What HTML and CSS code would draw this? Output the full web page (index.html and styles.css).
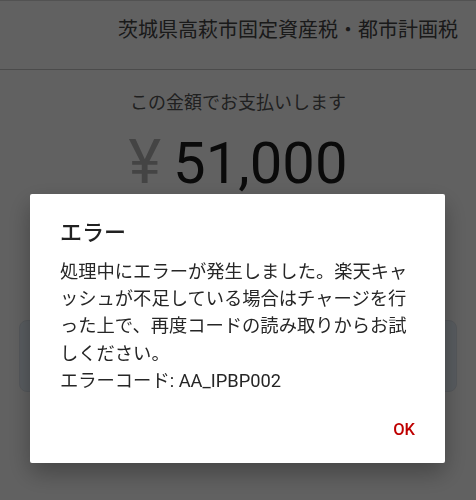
FILE: index.html
```html
<!DOCTYPE html>
<html lang="ja">
<head>
  <meta charset="UTF-8" />
  <meta name="viewport" content="width=device-width, initial-scale=1.0"/>
  <title>お支払い</title>
  <link rel="stylesheet" href="styles.css">
</head>
<body>

  <header class="payee">
    <h1>茨城県高萩市固定資産税・都市計画税</h1>
  </header>

  <section class="amount-area">
    <p class="prompt">この金額でお支払いします</p>
    <div class="amount">
      <span class="yen">¥</span>
      <span class="value">51,000</span>
    </div>
    <div class="info-card"></div>
  </section>

  <!-- Error dialog over a dimmed page -->
  <div class="scrim">
    <div class="dialog" role="alertdialog">
      <h2>エラー</h2>
      <p class="message">処理中にエラーが発生しました。楽天キャッシュが不足している場合はチャージを行った上で、再度コードの読み取りからお試しください。<br>エラーコード: AA_IPBP002</p>
      <div class="actions">
        <button type="button">OK</button>
      </div>
    </div>
  </div>

</body>
</html>
```

FILE: styles.css
```css
:root {
  --text: #3c3c3c;
  --red: #bf0000;
}
* { box-sizing: border-box; }
body {
  margin: 0;
  background: #fff;
  color: var(--text);
  font-family: Roboto, "Noto Sans CJK JP", sans-serif;
}

/* Payee header */
.payee {
  height: 70px;
  padding: 14px 18px 0;
  border-top: 1px solid #d8d8d8;
  border-bottom: 1px solid #c4c4c4;
}
.payee h1 {
  margin: 0;
  text-align: right;
  font-size: 20px;
  font-weight: 400;
  line-height: 30px;
  color: #444;
}

/* Amount */
.amount-area {
  display: flex;
  flex-direction: column;
  align-items: center;
}
.prompt {
  margin: 20px 0 0;
  font-size: 18px;
  line-height: 26px;
  color: #555;
}
.amount {
  display: flex;
  align-items: baseline;
  gap: 12px;
  margin-top: 14px;
  line-height: 64px;
}
.amount .yen {
  font-size: 62px;
  color: #b4b4b4;
}
.amount .value {
  font-size: 58px;
  color: #1c1c1c;
}
.info-card {
  align-self: stretch;
  height: 72px;
  margin: 125px 19px 0;
  background: #e9f2fb;
  border: 1px solid #dfe6ee;
  border-radius: 8px;
}

/* Dialog */
.scrim {
  position: fixed;
  inset: 0;
  background: rgba(0, 0, 0, 0.62);
  padding: 194px 31px 0 30px;
}
.dialog {
  background: #fff;
  border-radius: 2px;
  padding: 24px 30px 16px;
  height: 269px;
  box-shadow: 0 10px 24px rgba(0, 0, 0, 0.3);
}
.dialog h2 {
  margin: 0;
  font-size: 22px;
  font-weight: 500;
  line-height: 30px;
  color: #212121;
}
.message {
  margin: 10px 0 0;
  font-size: 18.3px;
  line-height: 27.2px;
  color: #262626;
  line-break: anywhere;
}
.actions {
  display: flex;
  justify-content: flex-end;
  margin-top: 17px;
}
.actions button {
  border: 0;
  background: none;
  padding: 0 10px;
  margin-right: -10px;
  height: 36px;
  font-family: Roboto, sans-serif;
  font-size: 16.5px;
  font-weight: 500;
  color: var(--red);
}
```
